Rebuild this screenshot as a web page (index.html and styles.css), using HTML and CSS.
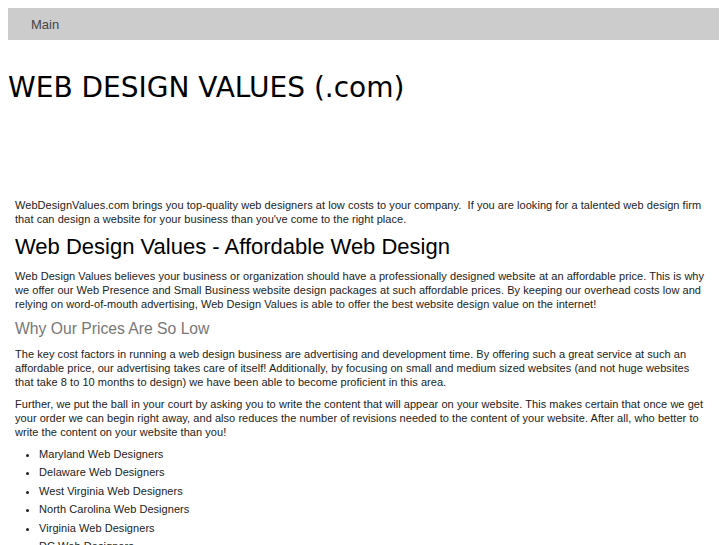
FILE: index.html
```html
<!doctype html>
<html lang="en">
<head>
	<meta charset="utf-8">
	<title>Web Design Values</title>
	<link rel="stylesheet" href="styles.css">
</head>
<body>
	<!--верхнее меню-->
	<div class="menu">
		<a href="#" class="menuItem">Main</a>
	</div>

	<h1 class="siteTitle">WEB DESIGN VALUES (.com)</h1>

	<div class="content">
		<p>WebDesignValues.com brings you top-quality web designers at low costs to your company.&nbsp; If you are looking for a talented web design firm that can design a website for your business than you've come to the right place.</p>

		<h2>Web Design Values - Affordable Web Design</h2>

		<p>Web Design Values believes your business or organization should have a professionally designed website at an affordable price. This is why we offer our Web Presence and Small Business website design packages at such affordable prices. By keeping our overhead costs low and relying on word-of-mouth advertising, Web Design Values is able to offer the best website design value on the internet!</p>

		<h3>Why Our Prices Are So Low</h3>

		<p>The key cost factors in running a web design business are advertising and development time. By offering such a great service at such an affordable price, our advertising takes care of itself! Additionally, by focusing on small and medium sized websites (and not huge websites that take 8 to 10 months to design) we have been able to become proficient in this area.</p>

		<p>Further, we put the ball in your court by asking you to write the content that will appear on your website. This makes certain that once we get your order we can begin right away, and also reduces the number of revisions needed to the content of your website. After all, who better to write the content on your website than you!</p>

		<ul class="states">
			<li>Maryland Web Designers</li>
			<li>Delaware Web Designers</li>
			<li>West Virginia Web Designers</li>
			<li>North Carolina Web Designers</li>
			<li>Virginia Web Designers</li>
			<li>DC Web Designers</li>
		</ul>
	</div>
</body>
</html>
```

FILE: styles.css
```css
body {
	margin: 8px;
	background-color: #fff;
	color: #222;
	font-family: "Liberation Sans", Arial, sans-serif;
}

/*меню*/
.menu {
	background-color: #ccc;
	height: 32px;
	display: flex;
	align-items: center;
	padding-left: 23px;
}

.menuItem {
	font-size: 13px;
	color: #444;
	text-decoration: none;
}

/*заголовок сайта*/
.siteTitle {
	font-family: "DejaVu Sans", sans-serif;
	font-weight: normal;
	font-size: 28px;
	color: #000;
	margin: 31px 0 0;
	height: 127px;
}

/*основной текст*/
.content {
	padding: 0 14px 0 7px;
	letter-spacing: 0.05px;
}

.content p {
	font-size: 11px;
	line-height: 14px;
	margin: 0 0 8px;
}

.content h2 {
	font-weight: normal;
	font-size: 22px;
	letter-spacing: 0;
	color: #000;
	margin: 8px 0 9px;
}

.content h3 {
	font-weight: normal;
	font-size: 15.7px;
	letter-spacing: 0;
	color: #777;
	margin: 9px 0 9px;
}

.states {
	margin: 0;
	padding-left: 24px;
}

.states li {
	font-size: 11px;
	line-height: 14px;
	margin-bottom: 4.4px;
}
```
